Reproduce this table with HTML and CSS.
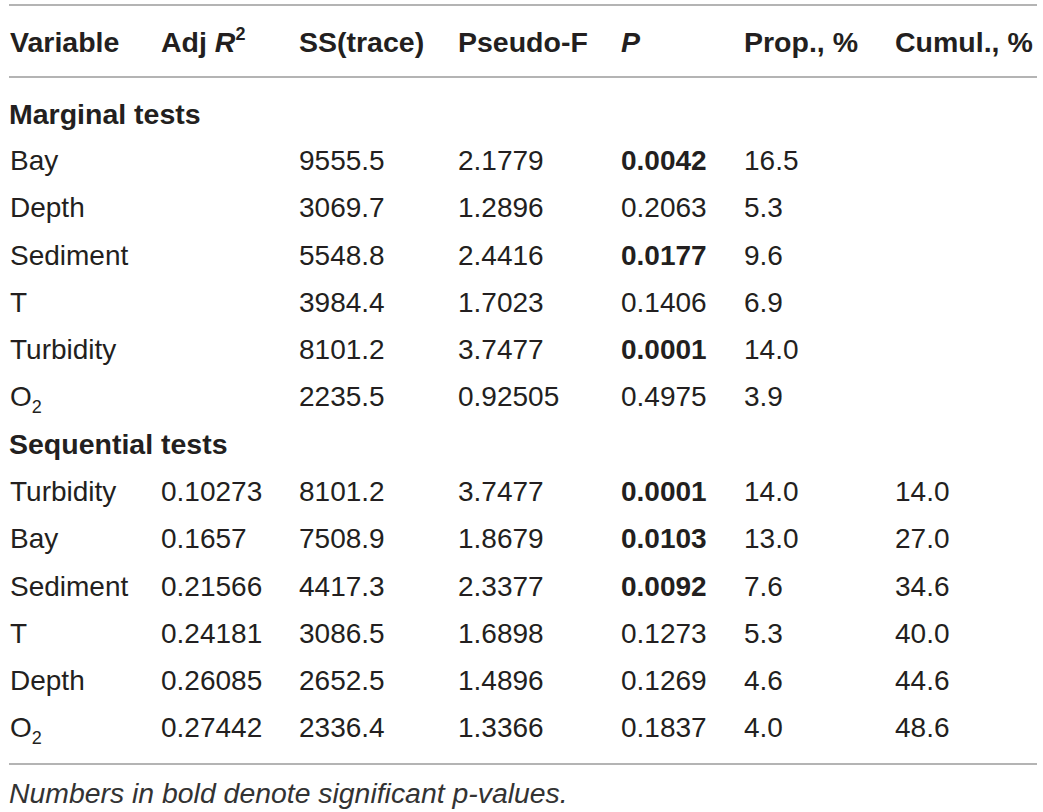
FILE: index.html
```html
<!DOCTYPE html>
<html lang="en">
  <head>
    <meta charset="UTF-8" />
    <meta name="viewport" content="width=device-width, initial-scale=1.0" />
    <title>Marginal and sequential tests</title>
    <link rel="stylesheet" href="styles.css">
  </head>
  <body>
    <div class="wrap">
      <table class="stats">
        <colgroup>
          <col class="c1"><col class="c2"><col class="c3"><col class="c4"><col class="c5"><col class="c6"><col class="c7">
        </colgroup>
        <thead>
          <tr>
            <th>Variable</th>
            <th>Adj <i>R</i><sup>2</sup></th>
            <th>SS(trace)</th>
            <th>Pseudo-F</th>
            <th><i>P</i></th>
            <th>Prop., %</th>
            <th>Cumul., %</th>
          </tr>
        </thead>
        <tbody>
          <tr class="group first"><td colspan="7">Marginal tests</td></tr>
          <tr><td>Bay</td><td></td><td>9555.5</td><td>2.1779</td><td><b>0.0042</b></td><td>16.5</td><td></td></tr>
          <tr><td>Depth</td><td></td><td>3069.7</td><td>1.2896</td><td>0.2063</td><td>5.3</td><td></td></tr>
          <tr><td>Sediment</td><td></td><td>5548.8</td><td>2.4416</td><td><b>0.0177</b></td><td>9.6</td><td></td></tr>
          <tr><td>T</td><td></td><td>3984.4</td><td>1.7023</td><td>0.1406</td><td>6.9</td><td></td></tr>
          <tr><td>Turbidity</td><td></td><td>8101.2</td><td>3.7477</td><td><b>0.0001</b></td><td>14.0</td><td></td></tr>
          <tr><td>O<sub>2</sub></td><td></td><td>2235.5</td><td>0.92505</td><td>0.4975</td><td>3.9</td><td></td></tr>
          <tr class="group"><td colspan="7">Sequential tests</td></tr>
          <tr><td>Turbidity</td><td>0.10273</td><td>8101.2</td><td>3.7477</td><td><b>0.0001</b></td><td>14.0</td><td>14.0</td></tr>
          <tr><td>Bay</td><td>0.1657</td><td>7508.9</td><td>1.8679</td><td><b>0.0103</b></td><td>13.0</td><td>27.0</td></tr>
          <tr><td>Sediment</td><td>0.21566</td><td>4417.3</td><td>2.3377</td><td><b>0.0092</b></td><td>7.6</td><td>34.6</td></tr>
          <tr><td>T</td><td>0.24181</td><td>3086.5</td><td>1.6898</td><td>0.1273</td><td>5.3</td><td>40.0</td></tr>
          <tr><td>Depth</td><td>0.26085</td><td>2652.5</td><td>1.4896</td><td>0.1269</td><td>4.6</td><td>44.6</td></tr>
          <tr class="last"><td>O<sub>2</sub></td><td>0.27442</td><td>2336.4</td><td>1.3366</td><td>0.1837</td><td>4.0</td><td>48.6</td></tr>
        </tbody>
      </table>
      <p class="note">Numbers in bold denote significant p-values.</p>
    </div>
  </body>
</html>
```

FILE: styles.css
```css
* {
  margin: 0;
  padding: 0;
  box-sizing: border-box;
}
body {
  font-family: "Liberation Sans", Arial, sans-serif;
  color: #231f20;
  background: #fff;
}
.wrap {
  padding: 4px 6px 0 9px;
}
.stats {
  width: 1028px;
  border-collapse: collapse;
  table-layout: fixed;
  font-size: 28px;
  border-top: 2px solid #b4b4b4;
  border-bottom: 2px solid #b4b4b4;
}
.c1 { width: 151px; }
.c2 { width: 138px; }
.c3 { width: 159px; }
.c4 { width: 163px; }
.c5 { width: 123px; }
.c6 { width: 151px; }
.c7 { width: 143px; }

th {
  text-align: left;
  font-weight: bold;
  font-size: 28.5px;
  height: 72px;
  padding-left: 1px;
  padding-top: 2px;
  border-bottom: 2px solid #b4b4b4;
  vertical-align: middle;
}
th i {
  font-style: italic;
}
sup {
  font-size: 18px;
  vertical-align: 12px;
  line-height: 0;
}
td {
  height: 47.3px;
  padding-left: 1px;
  white-space: nowrap;
  vertical-align: middle;
}
sub {
  font-size: 18px;
  vertical-align: -7px;
  line-height: 0;
}
.group td {
  font-weight: bold;
  font-size: 28.5px;
  padding-left: 0;
}
.first td {
  height: 60.3px;
  padding-top: 13px;
}
.last td {
  height: 59.3px;
  padding-bottom: 12px;
}
.note {
  font-style: italic;
  font-size: 28.4px;
  color: #333;
  margin-top: 12px;
}
```
